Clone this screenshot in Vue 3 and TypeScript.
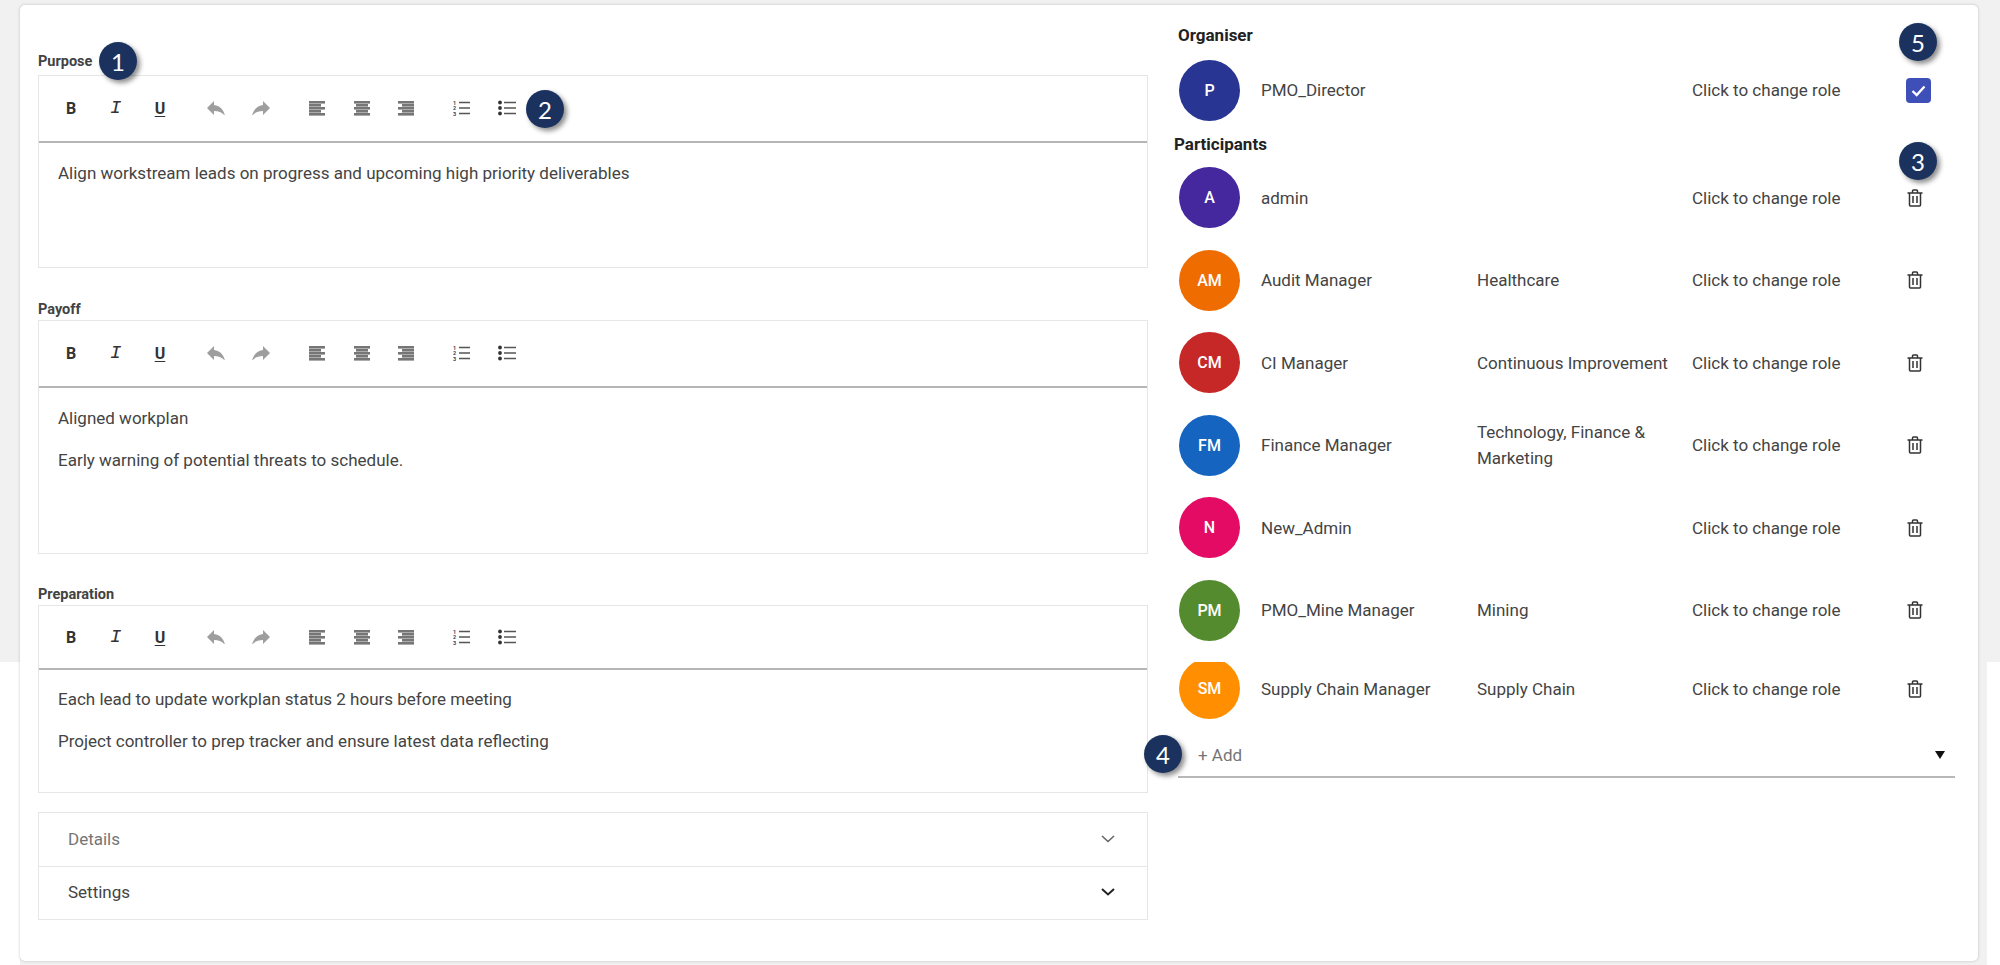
<template>
  <div class="page">
    <div class="patch patch--left"></div>
    <div class="patch patch--right"></div>

    <div class="card">
      <!-- left column: rich text editors -->
      <div class="left">
        <section v-for="ed in editors" :key="ed.label" class="block" :class="'block--' + ed.key">
          <div class="label">{{ ed.label }}</div>
          <div class="editor">
            <div class="toolbar">
              <div class="group">
                <span class="tool tool--b">B</span>
                <span class="tool tool--i">I</span>
                <span class="tool tool--u">U</span>
              </div>
              <div class="group">
                <span class="tool">
                  <svg width="18" height="14" viewBox="3 5 18 14"><path fill="#9e9e9e" d="M10 9V5l-7 7 7 7v-4.1c5 0 8.5 1.6 11 5.1-1-5-4-10-11-11z" /></svg>
                </span>
                <span class="tool">
                  <svg class="flip" width="18" height="14" viewBox="3 5 18 14"><path fill="#9e9e9e" d="M10 9V5l-7 7 7 7v-4.1c5 0 8.5 1.6 11 5.1-1-5-4-10-11-11z" /></svg>
                </span>
              </div>
              <div class="group">
                <span v-for="a in aligns" :key="a.name" class="tool">
                  <svg width="16" height="15" viewBox="0 0 16 15">
                    <rect v-for="(w, i) in [16, 12, 16, 12, 16]" :key="i" :x="a.x(w)" :y="i * 3" :width="w" height="2.6" fill="#767676" />
                  </svg>
                </span>
              </div>
              <div class="group">
                <span class="tool">
                  <svg width="18" height="16" viewBox="0 0 18 16">
                    <text x="0" y="4.5" class="ol-num">1</text>
                    <text x="0" y="10" class="ol-num">2</text>
                    <text x="0" y="15.5" class="ol-num">3</text>
                    <path d="M6 2.5h11M6 8h11M6 13.5h11" stroke="#555" stroke-width="1.4" />
                  </svg>
                </span>
                <span class="tool">
                  <svg width="18" height="16" viewBox="0 0 18 16">
                    <circle cx="2" cy="2.5" r="1.9" fill="#333" />
                    <circle cx="2" cy="8" r="1.9" fill="#333" />
                    <circle cx="2" cy="13.5" r="1.9" fill="#333" />
                    <path d="M6 2.5h12M6 8h12M6 13.5h12" stroke="#555" stroke-width="1.4" />
                  </svg>
                </span>
              </div>
            </div>
            <div class="body">
              <p v-for="line in ed.lines" :key="line">{{ line }}</p>
            </div>
          </div>
        </section>

        <div class="accordion">
          <div class="acc-row acc-row--muted">
            <span>Details</span>
            <svg width="14" height="8" viewBox="0 0 14 8"><path d="M1 1l6 5.5L13 1" fill="none" stroke="#666" stroke-width="1.6" /></svg>
          </div>
          <div class="acc-row">
            <span>Settings</span>
            <svg width="14" height="8" viewBox="0 0 14 8"><path d="M1 1l6 5.5L13 1" fill="none" stroke="#222" stroke-width="2" /></svg>
          </div>
        </div>
      </div>

      <!-- right column: people -->
      <div class="right">
        <div class="heading heading--org">Organiser</div>
        <div class="person">
          <div class="avatar" style="background: #283593">P</div>
          <div class="name">PMO_Director</div>
          <div class="dept"></div>
          <div class="role">Click to change role</div>
          <div class="action">
            <svg class="check" width="25" height="25" viewBox="0 0 25 25">
              <rect width="25" height="25" rx="4" fill="#3f4fb8" />
              <path d="M6.5 13l4.2 4 7.8-8.5" fill="none" stroke="#fff" stroke-width="2.4" />
            </svg>
          </div>
        </div>

        <div class="heading heading--part">Participants</div>
        <div
          v-for="p in participants"
          :key="p.name"
          class="person"
          :class="{ 'person--last': p.initials === 'SM' }"
        >
          <div class="avatar" :style="{ background: p.color }">{{ p.initials }}</div>
          <div class="name">{{ p.name }}</div>
          <div class="dept">{{ p.dept }}</div>
          <div class="role">Click to change role</div>
          <div class="action">
            <svg width="16" height="18" viewBox="0 0 16 18" fill="none" stroke="#333" stroke-width="1.5">
              <path d="M.5 4h15M5.5 4V2a1 1 0 0 1 1-1h3a1 1 0 0 1 1 1v2M2.5 4v12a1 1 0 0 0 1 1h9a1 1 0 0 0 1-1V4M6 7v7M10 7v7" />
            </svg>
          </div>
        </div>

        <div class="add">
          <span>+ Add</span>
          <span class="caret"></span>
        </div>
      </div>
    </div>

    <!-- numbered callouts -->
    <span v-for="n in [1, 2, 3, 4, 5]" :key="n" class="callout" :class="'callout--' + n">{{ n }}</span>
  </div>
</template>

<script setup lang="ts">
interface Editor {
  key: string;
  label: string;
  lines: string[];
}

interface Participant {
  initials: string;
  name: string;
  dept: string;
  color: string;
}

const editors: Editor[] = [
  {
    key: 'purpose',
    label: 'Purpose',
    lines: ['Align workstream leads on progress and upcoming high priority deliverables'],
  },
  {
    key: 'payoff',
    label: 'Payoff',
    lines: ['Aligned workplan', 'Early warning of potential threats to schedule.'],
  },
  {
    key: 'preparation',
    label: 'Preparation',
    lines: [
      'Each lead to update workplan status 2 hours before meeting',
      'Project controller to prep tracker and ensure latest data reflecting',
    ],
  },
];

const aligns = [
  { name: 'left', x: (_w: number) => 0 },
  { name: 'center', x: (w: number) => (16 - w) / 2 },
  { name: 'right', x: (w: number) => 16 - w },
];

const participants: Participant[] = [
  { initials: 'A', name: 'admin', dept: '', color: '#45289e' },
  { initials: 'AM', name: 'Audit Manager', dept: 'Healthcare', color: '#ef6c00' },
  { initials: 'CM', name: 'CI Manager', dept: 'Continuous Improvement', color: '#c62828' },
  { initials: 'FM', name: 'Finance Manager', dept: 'Technology, Finance & Marketing', color: '#1565c0' },
  { initials: 'N', name: 'New_Admin', dept: '', color: '#e30b63' },
  { initials: 'PM', name: 'PMO_Mine Manager', dept: 'Mining', color: '#558b2f' },
  { initials: 'SM', name: 'Supply Chain Manager', dept: 'Supply Chain', color: '#ff8f00' },
];
</script>

<style>
body {
  margin: 0;
  background: #f1f1f1;
}
</style>

<style scoped>
.page {
  position: relative;
  height: 965px;
  box-sizing: border-box;
  padding: 5px 22px 4px 20px;
  background: #f1f1f1;
  overflow: hidden;
  font-family: Roboto, "Liberation Sans", sans-serif;
  font-size: 17px;
  color: #444;
}

/* the capture has white patches over the grey margins */
.patch {
  position: absolute;
  top: 662px;
  bottom: 0;
  background: #fff;
}
.patch--left { left: 0; width: 20px; }
.patch--right { left: 1987px; right: 0; }

.card {
  position: relative;
  display: flex;
  height: 100%;
  box-sizing: border-box;
  background: #fff;
  border-radius: 5px;
  box-shadow: 0 0 3px rgba(0, 0, 0, 0.22);
}

/* ── Left column ── */
.left {
  width: 1110px;
  margin-left: 18px;
  padding-top: 48px;
  flex-shrink: 0;
}

.block { margin-bottom: 33px; }
.block--payoff { margin-bottom: 32px; }
.block--preparation { margin-bottom: 19px; }

.label {
  height: 18px;
  line-height: 18px;
  margin-bottom: 1px;
  font-size: 14.5px;
  font-weight: 700;
  color: #424242;
}
.block--purpose .label { margin-bottom: 4px; }

.editor {
  box-sizing: border-box;
  border: 1.5px solid #e6e6e6;
  height: 193px;
}
.block--payoff .editor { height: 234px; }
.block--preparation .editor { height: 188px; }

.toolbar {
  box-sizing: border-box;
  height: 67px;
  padding: 0 0 1px 10px;
  display: flex;
  align-items: center;
  gap: 12px;
  border-bottom: 2px solid #b5b5b5;
}
.block--preparation .toolbar {
  height: 64px;
  padding-bottom: 0;
}

.group { display: flex; }

.tool {
  width: 44.4px;
  height: 30px;
  display: flex;
  align-items: center;
  justify-content: center;
  color: #333;
}
.tool--b { font-size: 16px; font-weight: 700; }
.tool--i {
  font-family: "Liberation Mono", monospace;
  font-style: italic;
  font-size: 19px;
}
.tool--u {
  font-size: 16px;
  font-weight: 700;
  text-decoration: underline;
  text-underline-offset: 2px;
}

.flip { transform: scaleX(-1); }

.ol-num {
  font-size: 5.5px;
  font-weight: 700;
  fill: #444;
}

.body {
  padding: 18px 19px 0;
  color: #444;
}
.block--preparation .body { padding-top: 17px; }
.body p {
  margin: 0 0 18px;
  line-height: 24px;
}

.accordion { border: 1.5px solid #e6e6e6; }

.acc-row {
  box-sizing: border-box;
  height: 53px;
  padding: 0 32px 2px 29px;
  display: flex;
  align-items: center;
  justify-content: space-between;
  color: #444;
}
.acc-row + .acc-row { border-top: 1.5px solid #e6e6e6; }
.acc-row--muted { color: #757575; }

/* ── Right column ── */
.right {
  width: 781px;
  margin-left: 26px;
  padding-top: 20px;
  flex-shrink: 0;
}

.heading {
  height: 20px;
  line-height: 20px;
  font-weight: 700;
  color: #222;
}
.heading--org { margin: 0 0 4px 4px; }
.heading--part { margin: 2px 0 3px; }

.person {
  height: 82.5px;
  padding-left: 5px;
  display: flex;
  align-items: center;
}
.person--last { height: 74px; }
.person--last .avatar { clip-path: inset(4px 0 0 0); }

.avatar {
  width: 61px;
  height: 61px;
  margin-right: 21px;
  border-radius: 50%;
  flex-shrink: 0;
  display: flex;
  align-items: center;
  justify-content: center;
  color: #fff;
  font-size: 16px;
  font-weight: 500;
}

.name { width: 216px; flex-shrink: 0; }
.dept {
  width: 215px;
  padding-right: 10px;
  box-sizing: border-box;
  flex-shrink: 0;
  line-height: 26px;
}
.role { width: 215px; flex-shrink: 0; }

.action {
  width: 16px;
  display: flex;
  align-items: center;
}
.check { margin-left: -1px; flex-shrink: 0; }

.add {
  box-sizing: border-box;
  height: 40px;
  margin: 12px 0 0 4px;
  padding: 0 10px 3px 20px;
  display: flex;
  align-items: center;
  justify-content: space-between;
  border-bottom: 2px solid #b8b8b8;
  color: #757575;
}

.caret {
  width: 0;
  height: 0;
  border-left: 5.5px solid transparent;
  border-right: 5.5px solid transparent;
  border-top: 8px solid #111;
}

/* ── Callouts ── */
.callout {
  position: absolute;
  width: 38px;
  height: 38px;
  border-radius: 50%;
  background: #1b325f;
  box-shadow: 3px 3px 5px rgba(0, 0, 0, 0.45);
  display: flex;
  align-items: center;
  justify-content: center;
  color: #fff;
  font-family: Lato, "Open Sans", sans-serif;
  font-size: 24px;
}
.callout--1 { left: 99px; top: 42px; }
.callout--2 { left: 526px; top: 90px; }
.callout--3 { left: 1899px; top: 142px; }
.callout--4 { left: 1144px; top: 735px; }
.callout--5 { left: 1899px; top: 23px; }
</style>
